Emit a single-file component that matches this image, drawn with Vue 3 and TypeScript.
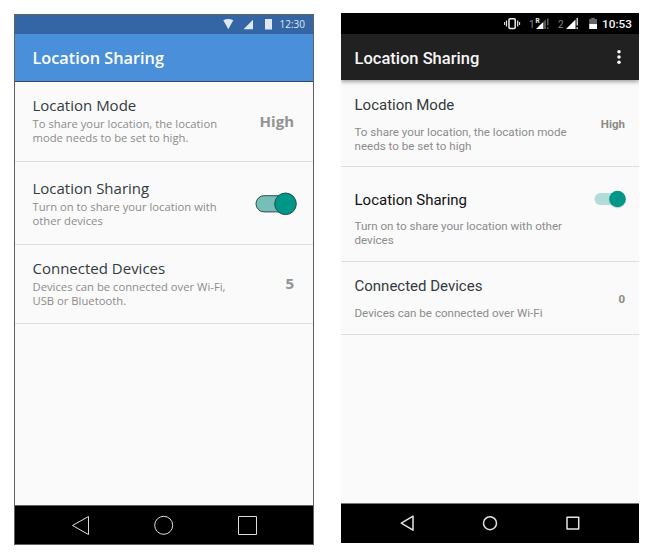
<script setup lang="ts">
interface Row {
  key: string
  title: string
  lines: string[]
  value?: string
}

const mockRows: Row[] = [
  { key: 'mode', title: 'Location Mode', lines: ['To share your location, the location', 'mode needs to be set to high.'], value: 'High' },
  { key: 'sharing', title: 'Location Sharing', lines: ['Turn on to share your location with', 'other devices'] },
  { key: 'devices', title: 'Connected Devices', lines: ['Devices can be connected over Wi-Fi,', 'USB or Bluetooth.'], value: '5' },
]

const deviceRows: Row[] = [
  { key: 'mode', title: 'Location Mode', lines: ['To share your location, the location mode', 'needs to be set to high'], value: 'High' },
  { key: 'sharing', title: 'Location Sharing', lines: ['Turn on to share your location with other', 'devices'] },
  { key: 'devices', title: 'Connected Devices', lines: ['Devices can be connected over Wi-Fi'], value: '0' },
]
</script>

<template>
  <main class="stage">
    <section class="phone mock">
      <div class="status">
        <svg class="status-icons" width="52" height="19" viewBox="0 0 52 19">
          <path d="M0.3 5.2Q5.3 2.8 10.3 5.2L5.3 14.3Z" />
          <path d="M20.5 14.3L30 4.8V14.3Z" />
          <path d="M42 4H49V14.5H42Z" />
        </svg>
        <span class="clock">12:30</span>
      </div>
      <header class="bar"><h1>Location Sharing</h1></header>
      <div class="list">
        <div v-for="row in mockRows" :key="row.key" class="row" :class="row.key">
          <div class="text">
            <h2>{{ row.title }}</h2>
            <p><span v-for="line in row.lines" :key="line">{{ line }}</span></p>
          </div>
          <strong v-if="row.value" class="value">{{ row.value }}</strong>
          <svg v-else class="toggle" width="42" height="24" viewBox="0 0 42 24">
            <rect x="1" y="3.7" width="36" height="16.2" rx="8.1" fill="#76bfb9" stroke="#344a4b" />
            <circle cx="30.5" cy="11.8" r="10.8" fill="#009688" stroke="#24504f" />
          </svg>
        </div>
      </div>
      <nav class="nav">
        <svg width="298" height="38" viewBox="0 1 298 38" fill="none" stroke="#dedede" stroke-width="1">
          <path d="M57.5 20.5L73.5 11.5V29.5Z" />
          <circle cx="148.7" cy="20.3" r="9" />
          <path d="M223.5 11.5H241.5V29.5H223.5Z" />
        </svg>
      </nav>
    </section>

    <section class="phone device">
      <div class="status">
        <svg class="status-icons" width="98" height="21" viewBox="0 0 98 21">
          <g fill="none" stroke="#eee">
            <rect x="5" y="5.8" width="6.2" height="9.8" rx="1" stroke-width="1.5" />
            <path d="M2.5 7.5V13.5M13.7 7.5V13.5" stroke-width="1.2" />
            <path d="M0.6 9V12M15.6 9V12" stroke-width="1" />
          </g>
          <text x="25" y="15" fill="#888" font-size="10">1</text>
          <path d="M32 16L38.5 10L39 16Z" fill="#fff" />
          <path d="M34.5 13.7L39.5 8.8V16H34.5Z" fill="#fff" />
          <path d="M39.5 8.8L42 6.3V16H39.5Z" fill="#555" />
          <path d="M43.8 5.5V12.5M43.8 14.3V16" stroke="#666" stroke-width="1.4" />
          <text x="31.6" y="9.8" fill="#eee" font-size="6.5" font-weight="700">R</text>
          <text x="54" y="15" fill="#888" font-size="10">2</text>
          <path d="M62 16L71.5 6.5V16Z" fill="#fff" />
          <path d="M73.2 5V12.5M73.2 14.3V16" stroke="#eee" stroke-width="1.3" />
          <path d="M85.2 6H87.3V4.7H90.7V6H93V11H85.2Z" fill="#666" />
          <path d="M85.2 11H93V16H85.2Z" fill="#fff" />
        </svg>
        <span class="clock">10:53</span>
      </div>
      <header class="bar">
        <h1>Location Sharing</h1>
        <svg width="4" height="16" viewBox="0 0 4 16" fill="#fff">
          <circle cx="2" cy="2.8" r="1.75" />
          <circle cx="2" cy="8" r="1.75" />
          <circle cx="2" cy="13.2" r="1.75" />
        </svg>
      </header>
      <div class="list">
        <div v-for="row in deviceRows" :key="row.key" class="row" :class="row.key">
          <div class="text">
            <h2>{{ row.title }}</h2>
            <p><span v-for="line in row.lines" :key="line">{{ line }}</span></p>
          </div>
          <strong v-if="row.value" class="value">{{ row.value }}</strong>
          <svg v-else class="toggle" width="34" height="22" viewBox="0 0 34 22">
            <rect x="1.5" y="5" width="26" height="12" rx="6" fill="#b0ddd9" />
            <circle cx="24.5" cy="12" r="8.5" fill="#000" opacity=".12" />
            <circle cx="24.5" cy="11" r="8.3" fill="#009688" />
          </svg>
        </div>
      </div>
      <nav class="nav">
        <svg width="298" height="39" viewBox="0 0 298 39" fill="none" stroke="#e4e4e4" stroke-width="1.5" stroke-linejoin="round">
          <path d="M60.3 19.2L72 12.2V26.2Z" />
          <circle cx="149" cy="19.2" r="6.5" />
          <path d="M226 13.3H237.7V25H226Z" />
        </svg>
      </nav>
    </section>
  </main>
</template>

<style>
body {
  background: #fff;
}
</style>

<style scoped>
.stage {
  display: flex;
  align-items: flex-start;
  gap: 27px;
  width: 654px;
  height: 560px;
  padding: 13px 0 0 14px;
  box-sizing: border-box;
  overflow: hidden;
}
.phone {
  box-sizing: border-box;
  display: flex;
  flex-direction: column;
  background: #fafafa;
}
.mock {
  width: 300px;
  height: 531px;
  margin-top: 1px;
  border: 1px solid #5d6263;
  font-family: "Open Sans", "Noto Sans", sans-serif;
}
.device {
  width: 298px;
  height: 530px;
  font-family: Roboto, sans-serif;
}
.status,
.bar,
.row {
  display: flex;
  align-items: center;
  box-sizing: border-box;
}
h1,
h2,
p {
  margin: 0;
  white-space: nowrap;
}
h2 {
  font-size: 15px;
  font-weight: 400;
  line-height: 20px;
  color: #333b3d;
}
p {
  display: flex;
  flex-direction: column;
  font-size: 11.25px;
  line-height: 14px;
  color: #8c8c8c;
}
.status {
  justify-content: flex-end;
}
.row {
  align-items: flex-start;
  justify-content: space-between;
  border-bottom: 1px solid #dededc;
}
.list {
  flex: 1;
}
.nav,
.nav svg,
.toggle {
  display: block;
}

.mock .status {
  height: 19px;
  background: #3465a5;
  padding-right: 8px;
}
.mock .status-icons {
  fill: #dfe7f4;
  margin-right: 5px;
}
.mock .clock {
  font-size: 10px;
  line-height: 19px;
  font-weight: 500;
  color: #dfe7f4;
}
.mock .bar {
  height: 48px;
  padding: 0 17.5px;
  background: #4a8fd9;
  border-bottom: 1px solid #33475e;
}
.mock h1 {
  font-size: 16.3px;
  font-weight: 600;
  line-height: 24px;
  color: #fff;
}
.mock .row {
  padding: 13px 19px 0 17.5px;
}
.mock p {
  margin-top: 2px;
}
.mock .mode {
  height: 80px;
}
.mock .sharing {
  height: 83px;
  padding: 16px 16px 0 17.5px;
}
.mock .devices {
  height: 79px;
}
.mock .value {
  margin-top: 16px;
  font-size: 15px;
  line-height: 20px;
  color: #929292;
}
.mock .devices .value {
  margin-top: 15px;
}
.mock .toggle {
  margin-top: 14px;
}
.mock .nav {
  height: 38px;
  background: #000;
  border-top: 1px solid #5d6263;
}

.device .status {
  height: 21px;
  background: #000;
  padding-right: 7px;
}
.device .clock {
  font-size: 11.8px;
  font-weight: 500;
  line-height: 21px;
  padding-top: 1px;
  color: #f4f4f4;
}
.device .status-icons {
  margin-right: 0.5px;
}
.device .bar {
  position: relative;
  height: 46px;
  padding: 0 18px 0 13.5px;
  justify-content: space-between;
  background: #212121;
  box-shadow: 0 2px 4px rgba(0, 0, 0, 0.35);
  clip-path: inset(0 0 -8px);
}
.device h1 {
  padding-top: 3px;
  font-size: 16.5px;
  font-weight: 500;
  line-height: 24px;
  color: #f6f6f6;
}
.device .row {
  padding: 15px 14px 0 13.5px;
}
.device p {
  margin-top: 10px;
  font-size: 11.6px;
}
.device .mode {
  height: 87px;
}
.device .sharing {
  height: 95px;
  padding: 23px 12px 0 13.5px;
}
.device .sharing h2 {
  color: #111;
}
.device .sharing p {
  margin-top: 9px;
}
.device .devices {
  height: 73px;
  padding-top: 14px;
}
.device .value {
  margin-top: 19px;
  font-size: 11.5px;
  line-height: 20px;
  color: #8b8b86;
}
.device .devices .value {
  margin-top: 13px;
}
.device .toggle {
  margin-top: -2px;
}
.device .nav {
  height: 40px;
  background: #000;
  border-top: 1px solid #777;
  box-sizing: border-box;
}
</style>
